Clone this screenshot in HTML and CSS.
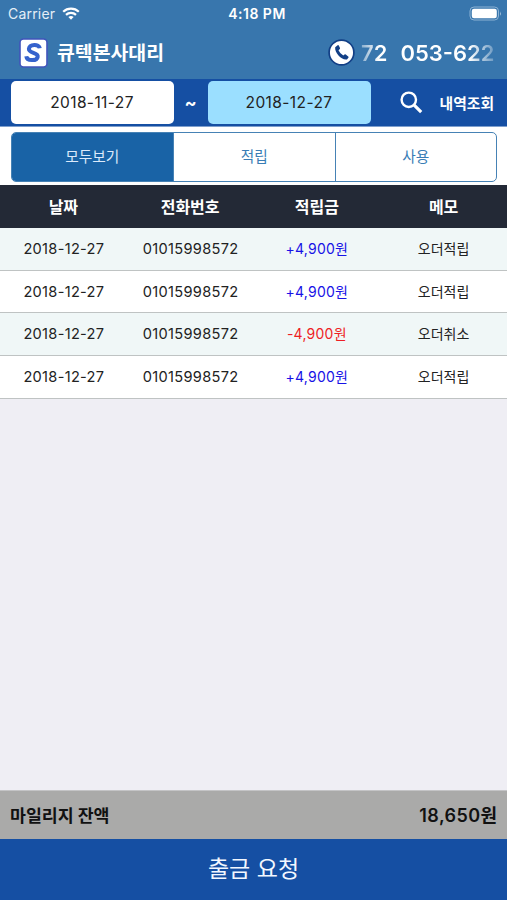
FILE: index.html
```html
<!DOCTYPE html>
<html lang="ko">
<head>
<meta charset="utf-8">
<title>큐텍본사대리</title>
<link rel="stylesheet" href="styles.css">
</head>
<body>
<div class="app">
  <header class="top">
    <div class="status">
      <div class="carrier"><span>Carrier</span>
        <svg class="wifi" width="18" height="13" viewBox="0 0 18 13"><g fill="none" stroke="#fff" stroke-width="2.2"><path d="M1.2 4.8a11.2 11.2 0 0 1 15.6 0"/><path d="M4 7.9a7.2 7.2 0 0 1 10 0"/></g><path fill="#fff" d="M6.4 10.1a3.8 3.8 0 0 1 5.2 0L9 12.8z"/></svg>
      </div>
      <span class="clock">4:18 PM</span>
      <svg class="battery" width="33" height="15" viewBox="0 0 33 15"><rect x="1" y="1" width="28.5" height="13" rx="4" fill="none" stroke="#8cb2d4" stroke-width="1"/><rect x="2.8" y="2.8" width="25" height="9.4" rx="2.2" fill="#fff"/><path d="M31 5.2q1.7 2.3 0 4.6z" fill="#a9c5de"/></svg>
    </div>
    <div class="brand">
      <svg class="logo" width="29" height="30" viewBox="0 0 29 30"><rect x="1" y="1" width="27" height="28" rx="3.5" fill="#fff" stroke="#4054bb" stroke-width="1.6"/><path d="M20.8 10.2C20.200 5.800 10.600 5.800 9.900 10.800c-.5 5 9.600 3.200 8.800 8C17.900 23.400 7.800 23.200 7.300 18.200" fill="none" stroke="#3562cd" stroke-width="4"/></svg>
      <h1>큐텍본사대리</h1>
      <svg class="phone" width="27" height="27" viewBox="0 0 27 27"><circle cx="13.500" cy="13.500" r="12.400" fill="#fff" stroke="#123f86" stroke-width="1.700"/><path d="M7.200 8.300L9.600 6.200Q10.300 5.800 10.800 6.500L12 9.100Q12.200 9.800 11.600 10.300L10.500 11.300Q11.800 14.500 15.300 16.500L16.500 15.500Q17.200 15 17.800 15.500L20.200 17.500Q20.900 18.100 20.400 18.800L18.900 20.500C13.500 21.500 6.400 13.700 7.200 8.300z" fill="#123f86"/></svg>
      <div class="ticker"><span>72</span><span>053-622</span></div>
    </div>
  </header>
  <section class="search">
    <div class="date">2018-11-27</div>
    <span class="tilde">~</span>
    <div class="date end">2018-12-27</div>
    <div class="lookup">
      <svg width="23" height="23" viewBox="0 0 23 23" fill="none" stroke="#fff"><circle cx="8.800" cy="8.800" r="7.200" stroke-width="2.400"/><path d="M14.200 14.200l7 7" stroke-width="3.200"/></svg>
      <span>내역조회</span>
    </div>
  </section>
  <nav class="tabs"><div class="segments"><span class="active">모두보기</span><span>적립</span><span>사용</span></div></nav>
  <div class="row head"><span>날짜</span><span>전화번호</span><span>적립금</span><span>메모</span></div>
  <main>
    <div class="row"><span class="num">2018-12-27</span><span class="num">01015998572</span><span class="plus">+4,900원</span><span class="memo">오더적립</span></div>
    <div class="row"><span class="num">2018-12-27</span><span class="num">01015998572</span><span class="plus">+4,900원</span><span class="memo">오더적립</span></div>
    <div class="row"><span class="num">2018-12-27</span><span class="num">01015998572</span><span class="minus">-4,900원</span><span class="memo">오더취소</span></div>
    <div class="row"><span class="num">2018-12-27</span><span class="num">01015998572</span><span class="plus">+4,900원</span><span class="memo">오더적립</span></div>
  </main>
  <div class="balance"><span>마일리지 잔액</span><span class="total">18,650원</span></div>
  <div class="withdraw">출금 요청</div>
</div>
</body>
</html>
```
FILE: styles.css
```css
* { box-sizing: border-box; }
body { margin: 0; font-family: Inter, "Noto Sans CJK KR", sans-serif; }
svg { display: block; flex: none; }
.app { width: 507px; height: 900px; display: flex; flex-direction: column; overflow: hidden; background: #efeef4; }
.top { height: 79px; flex: none; background: #3876ad; color: #fff; }
.status { height: 27px; padding: 0 5px 0 8px; display: grid; grid-template-columns: 1fr auto 1fr; align-items: center; font-size: 14px; line-height: 27px; }
.carrier { display: flex; align-items: center; gap: 7px; letter-spacing: .2px; color: #e4eef7; }
.clock { font-weight: 600; letter-spacing: .5px; padding-left: 4px; }
.battery { justify-self: end; }
.brand { height: 51px; padding: 0 13px 0 19px; display: flex; align-items: center; }
.brand h1 { margin: 0 0 0 9px; font-size: 19.400px; line-height: 30px; font-weight: 700; white-space: nowrap; }
.phone { margin-left: auto; }
.ticker { width: 133px; margin-left: 6px; display: flex; gap: 13px; font-size: 22px; line-height: 30px; font-weight: 600; overflow: hidden; white-space: nowrap; color: transparent; background: linear-gradient(90deg, #fff6, #fff 18px, #fff 108px, #fff4); background-clip: text; }
.search { height: 48px; flex: none; display: flex; align-items: center; padding: 0 13px 0 10.500px; background: #154fa3; border-bottom: 1px solid #7e9fcd; }
.date { width: 163px; height: 43px; border-radius: 5px; background: #fff; color: #222; text-align: center; font-size: 15.500px; line-height: 44px; letter-spacing: .4px; }
.date.end { background: #9bdfff; }
.tilde { width: 34px; text-align: center; color: #fff; font-size: 18px; font-weight: 700; }
.lookup { margin-left: auto; display: flex; align-items: center; gap: 17px; color: #fff; font-size: 14.800px; font-weight: 700; white-space: nowrap; }
.lookup span { padding-bottom: 1px; }
.tabs { height: 58px; flex: none; padding: 4.500px 10px 0 10.500px; background: #fff; }
.segments { height: 50.500px; display: grid; grid-template-columns: repeat(3, 1fr); border: 1.500px solid #4682b5; border-radius: 5px; overflow: hidden; color: #397db5; font-size: 14.700px; line-height: 49px; text-align: center; }
.segments span + span { border-left: 1px solid #4682b5; }
.segments .active { background: #1963a6; color: #dceafb; }
.row { height: 42.700px; display: grid; grid-template-columns: repeat(4, 1fr); align-items: center; text-align: center; border-bottom: 1.500px solid #bfc3c3; background: #fff; color: #222; font-size: 14px; white-space: nowrap; }
.row:nth-child(odd) { background: #f0f7f7; }
.row.head { height: 43px; flex: none; border: 0; padding-bottom: 2px; background: #232936; color: #fff; font-size: 16px; font-weight: 700; }
main { flex: 1; }
.num { font-size: 14.600px; letter-spacing: .3px; padding-left: 1px; }
.plus, .minus { letter-spacing: .25px; padding-bottom: 2px; }
.memo { padding-bottom: 2px; }
.row .plus { color: #1712e6; }
.row .minus { color: #ee1e25; }
.balance { height: 49px; flex: none; display: flex; align-items: center; justify-content: space-between; padding: 0 10px 2px; background: #aaaaa9; border-top: 1px solid #c4c4c6; color: #111; font-size: 17.300px; font-weight: 700; }
.total { font-weight: 600; font-size: 18px; letter-spacing: .4px; margin-right: -.4px; }
.withdraw { height: 61px; flex: none; background: #154fa3; color: #f2f7ff; font-size: 23px; line-height: 60px; text-align: center; }
```
